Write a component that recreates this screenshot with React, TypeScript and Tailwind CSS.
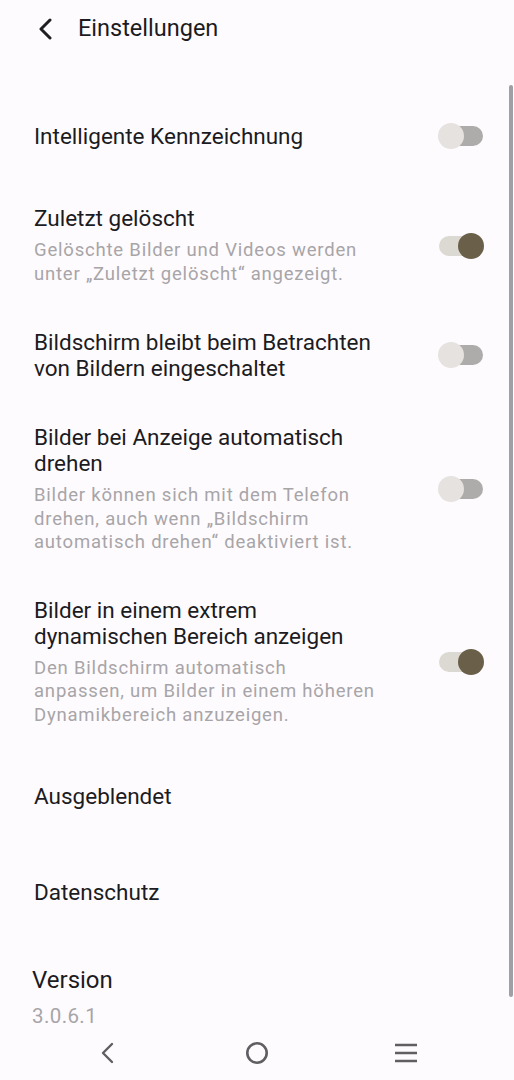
import React from "react";

const font = { fontFamily: "Roboto, 'Noto Sans', sans-serif" };

function Toggle({ on }: { on: boolean }) {
  return (
    <div className="relative w-[46px] h-[26px] flex items-center shrink-0">
      <div
        className={`w-[44px] h-[20px] rounded-full ml-[1px] ${on ? "bg-[#dcd9d3]" : "bg-[#aeacab]"}`}
      />
      <div
        className={`absolute top-0 w-[26px] h-[26px] rounded-full ${on ? "left-[20px] bg-[#6a6049]" : "left-0 bg-[#e5e2df]"}`}
      />
    </div>
  );
}

function Row({
  title,
  sub,
  toggle,
}: {
  title: string[];
  sub?: string[];
  toggle?: boolean;
}) {
  return (
    <div className="flex items-center min-h-[96px] py-[21px] pl-[34px] pr-[30px]">
      <div className="flex-1 min-w-0">
        <div className="text-[22.5px] leading-[26px] text-[#1c1b1f]">
          {title.map((t, i) => (
            <div key={i} className="whitespace-nowrap">{t}</div>
          ))}
        </div>
        {sub && (
          <div className="mt-[8px] text-[18.5px] leading-[23.5px] tracking-[0.8px] text-[#a7a5a8]">
            {sub.map((t, i) => (
              <div key={i} className="whitespace-nowrap">{t}</div>
            ))}
          </div>
        )}
      </div>
      {toggle !== undefined && <Toggle on={toggle} />}
    </div>
  );
}

export default function App() {
  return (
    <div className="relative w-[514px] h-[1080px] bg-[#fefbfe] overflow-hidden flex flex-col" style={font}>
      {/* header */}
      <div className="h-[54px] pt-[4px] flex items-center shrink-0">
        <div className="w-[78px] flex items-center pl-[37px]">
          <svg width="18" height="22" viewBox="0 0 18 22">
            <path d="M13 2 L4 11 L13 20" fill="none" stroke="#1f1e22" strokeWidth="3" strokeLinecap="round" strokeLinejoin="round" />
          </svg>
        </div>
        <div className="text-[23.5px] text-[#1c1b1f]">Einstellungen</div>
      </div>

      <div className="mt-[34px] flex flex-col">
        <Row title={["Intelligente Kennzeichnung"]} toggle={false} />
        <Row
          title={["Zuletzt gelöscht"]}
          sub={["Gelöschte Bilder und Videos werden", "unter „Zuletzt gelöscht“ angezeigt."]}
          toggle={true}
        />
        <Row title={["Bildschirm bleibt beim Betrachten", "von Bildern eingeschaltet"]} toggle={false} />
        <Row
          title={["Bilder bei Anzeige automatisch", "drehen"]}
          sub={["Bilder können sich mit dem Telefon", "drehen, auch wenn „Bildschirm", "automatisch drehen“ deaktiviert ist."]}
          toggle={false}
        />
        <Row
          title={["Bilder in einem extrem", "dynamischen Bereich anzeigen"]}
          sub={["Den Bildschirm automatisch", "anpassen, um Bilder in einem höheren", "Dynamikbereich anzuzeigen."]}
          toggle={true}
        />
        <Row title={["Ausgeblendet"]} />
        <Row title={["Datenschutz"]} />
        <div className="pl-[32px] pt-[26px]">
          <div className="text-[24px] leading-[28px] text-[#1c1b1f]">Version</div>
          <div className="mt-[10px] text-[20.5px] leading-[24px] tracking-[0.4px] text-[#a7a5a8]">3.0.6.1</div>
        </div>
      </div>

      {/* nav bar */}
      <div className="absolute bottom-0 left-0 right-0 h-[52px] flex items-center justify-center gap-[101px] pb-[2px]">
        <div className="w-[48px] flex justify-center">
          <svg width="16" height="22" viewBox="0 0 16 22">
            <path d="M12 2 L3 11 L12 20" fill="none" stroke="#5f5e62" strokeWidth="2.4" strokeLinecap="round" strokeLinejoin="round" />
          </svg>
        </div>
        <div className="w-[48px] flex justify-center">
          <svg width="26" height="26" viewBox="0 0 26 26">
            <circle cx="13" cy="13" r="9.7" fill="none" stroke="#5f5e62" strokeWidth="2.6" />
          </svg>
        </div>
        <div className="w-[48px] flex justify-center">
          <svg width="26" height="22" viewBox="0 0 26 22">
            <path d="M2 3 H24 M2 11 H24 M2 19 H24" fill="none" stroke="#5f5e62" strokeWidth="2.5" />
          </svg>
        </div>
      </div>

      {/* scrollbar */}
      <div className="absolute left-[509px] top-[85px] w-[4px] h-[912px] rounded-full bg-[#a09fa6]" />
    </div>
  );
}
